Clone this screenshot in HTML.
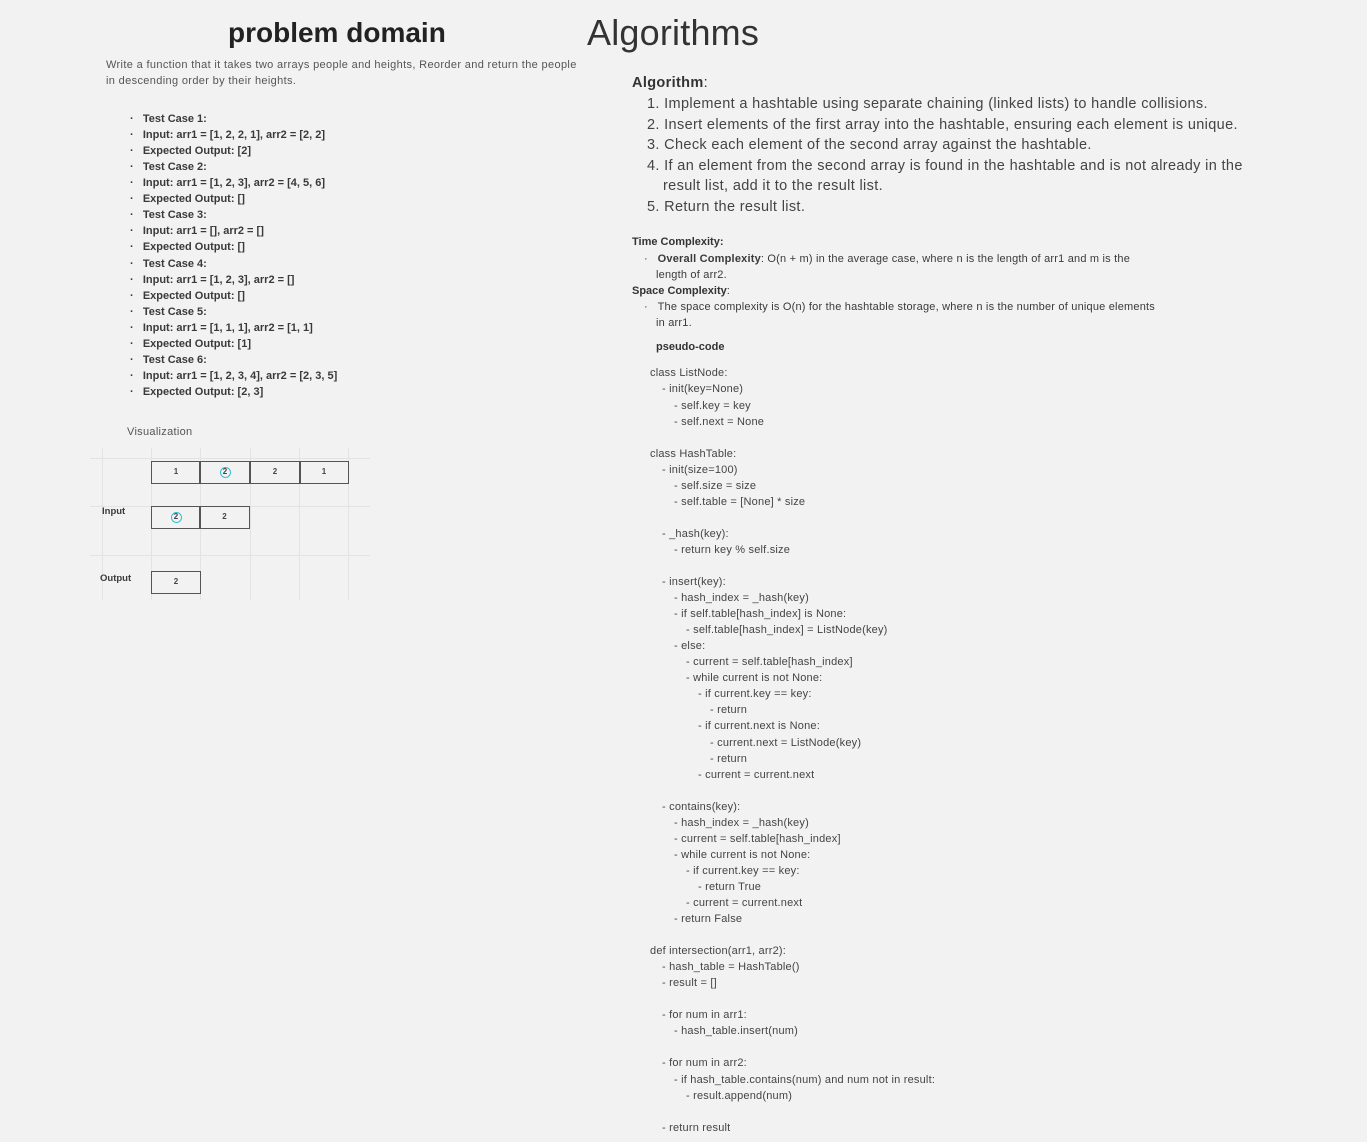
<!DOCTYPE html>
<html><head><meta charset="utf-8"><style>
*{margin:0;padding:0;box-sizing:border-box}
body{width:1367px;height:1142px;background:#f2f2f2;font-family:"Liberation Sans",sans-serif;color:#3a3a3a;position:relative;overflow:hidden}
.l{position:absolute;white-space:nowrap;line-height:16px}
.s{font-size:11px}
.b{font-weight:bold}
.m{font-size:14.5px;line-height:20px;color:#444;letter-spacing:0.35px}
.c{font-size:11px;color:#444;letter-spacing:0.2px}
.gl{position:absolute;background:#e3e3e3}
.cell{position:absolute;border:1.5px solid #555;height:23px;font-size:8px;font-weight:bold;text-align:center;line-height:20px;color:#444}
.circ{display:inline-block;width:11px;height:11px;border:1.5px solid #3bbccc;border-radius:50%;line-height:8px;font-size:8px}
.d{font-weight:bold;font-size:12px}
</style></head><body>
<div class="l b" style="left:228px;top:15px;font-size:28px;line-height:36px;color:#222">problem domain</div>
<div class="l" style="left:587px;top:12px;font-size:36px;line-height:42px;color:#333;letter-spacing:0.2px">Algorithms</div>

<div class="l s" style="left:106px;top:57px;color:#555;letter-spacing:0.35px">Write a function that it takes two arrays people and heights, Reorder and return the people</div>
<div class="l s" style="left:106px;top:73px;color:#555;letter-spacing:0.35px">in descending order by their heights.</div>

<div class="l s b" style="left:130px;top:111px">·&nbsp;&nbsp;&nbsp;Test Case 1:</div>
<div class="l s b" style="left:130px;top:127px">·&nbsp;&nbsp;&nbsp;Input: arr1 = [1, 2, 2, 1], arr2 = [2, 2]</div>
<div class="l s b" style="left:130px;top:143px">·&nbsp;&nbsp;&nbsp;Expected Output: [2]</div>
<div class="l s b" style="left:130px;top:159px">·&nbsp;&nbsp;&nbsp;Test Case 2:</div>
<div class="l s b" style="left:130px;top:175px">·&nbsp;&nbsp;&nbsp;Input: arr1 = [1, 2, 3], arr2 = [4, 5, 6]</div>
<div class="l s b" style="left:130px;top:191px">·&nbsp;&nbsp;&nbsp;Expected Output: []</div>
<div class="l s b" style="left:130px;top:207px">·&nbsp;&nbsp;&nbsp;Test Case 3:</div>
<div class="l s b" style="left:130px;top:223px">·&nbsp;&nbsp;&nbsp;Input: arr1 = [], arr2 = []</div>
<div class="l s b" style="left:130px;top:239px">·&nbsp;&nbsp;&nbsp;Expected Output: []</div>
<div class="l s b" style="left:130px;top:256px">·&nbsp;&nbsp;&nbsp;Test Case 4:</div>
<div class="l s b" style="left:130px;top:272px">·&nbsp;&nbsp;&nbsp;Input: arr1 = [1, 2, 3], arr2 = []</div>
<div class="l s b" style="left:130px;top:288px">·&nbsp;&nbsp;&nbsp;Expected Output: []</div>
<div class="l s b" style="left:130px;top:304px">·&nbsp;&nbsp;&nbsp;Test Case 5:</div>
<div class="l s b" style="left:130px;top:320px">·&nbsp;&nbsp;&nbsp;Input: arr1 = [1, 1, 1], arr2 = [1, 1]</div>
<div class="l s b" style="left:130px;top:336px">·&nbsp;&nbsp;&nbsp;Expected Output: [1]</div>
<div class="l s b" style="left:130px;top:352px">·&nbsp;&nbsp;&nbsp;Test Case 6:</div>
<div class="l s b" style="left:130px;top:368px">·&nbsp;&nbsp;&nbsp;Input: arr1 = [1, 2, 3, 4], arr2 = [2, 3, 5]</div>
<div class="l s b" style="left:130px;top:384px">·&nbsp;&nbsp;&nbsp;Expected Output: [2, 3]</div>

<div class="l s" style="left:127px;top:424px;color:#555;letter-spacing:0.3px">Visualization</div>
<div class="gl" style="left:102px;top:448px;width:1px;height:152px"></div>
<div class="gl" style="left:151px;top:448px;width:1px;height:152px"></div>
<div class="gl" style="left:200px;top:448px;width:1px;height:152px"></div>
<div class="gl" style="left:250px;top:448px;width:1px;height:152px"></div>
<div class="gl" style="left:299px;top:448px;width:1px;height:152px"></div>
<div class="gl" style="left:348px;top:448px;width:1px;height:152px"></div>
<div class="gl" style="left:90px;top:458px;width:280px;height:1px"></div>
<div class="gl" style="left:90px;top:506px;width:280px;height:1px"></div>
<div class="gl" style="left:90px;top:555px;width:280px;height:1px"></div>

<div class="cell" style="left:151px;top:461px;width:50px">1</div>
<div class="cell" style="left:199px;top:461px;width:52px"><span class="circ">2</span></div>
<div class="cell" style="left:249px;top:461px;width:52px">2</div>
<div class="cell" style="left:299px;top:461px;width:50px">1</div>
<div class="l b" style="left:102px;top:504px;font-size:9.5px">Input</div>
<div class="cell" style="left:151px;top:506px;width:50px"><span class="circ">2</span></div>
<div class="cell" style="left:199px;top:506px;width:51px">2</div>
<div class="l b" style="left:100px;top:571px;font-size:9.5px">Output</div>
<div class="cell" style="left:151px;top:571px;width:50px">2</div>

<div class="l m" style="left:632px;top:73px;color:#333"><b>Algorithm</b>:</div>
<div class="l m" style="left:647px;top:94px">1. Implement a hashtable using separate chaining (linked lists) to handle collisions.</div>
<div class="l m" style="left:647px;top:115px">2. Insert elements of the first array into the hashtable, ensuring each element is unique.</div>
<div class="l m" style="left:647px;top:135px">3. Check each element of the second array against the hashtable.</div>
<div class="l m" style="left:647px;top:156px">4. If an element from the second array is found in the hashtable and is not already in the</div>
<div class="l m" style="left:663px;top:176px">result list, add it to the result list.</div>
<div class="l m" style="left:647px;top:197px">5. Return the result list.</div>

<div class="l s b" style="left:632px;top:234px;color:#333">Time Complexity:</div>
<div class="l s" style="left:644px;top:251px;letter-spacing:0.2px">·&nbsp;&nbsp;&nbsp;<b>Overall Complexity</b>: O(n + m) in the average case, where n is the length of arr1 and m is the</div>
<div class="l s" style="left:656px;top:267px;letter-spacing:0.2px">length of arr2.</div>
<div class="l s" style="left:632px;top:283px;color:#333"><b>Space Complexity</b>:</div>
<div class="l s" style="left:644px;top:299px;letter-spacing:0.2px">·&nbsp;&nbsp;&nbsp;The space complexity is O(n) for the hashtable storage, where n is the number of unique elements</div>
<div class="l s" style="left:656px;top:315px;letter-spacing:0.2px">in arr1.</div>
<div class="l s b" style="left:656px;top:339px;color:#333">pseudo-code</div>

<div class="l c" style="left:650px;top:365px">class ListNode:</div>
<div class="l c" style="left:662px;top:381px">- init(key=None)</div>
<div class="l c" style="left:674px;top:398px">- self.key = key</div>
<div class="l c" style="left:674px;top:414px">- self.next = None</div>
<div class="l c" style="left:650px;top:446px">class HashTable:</div>
<div class="l c" style="left:662px;top:462px">- init(size=100)</div>
<div class="l c" style="left:674px;top:478px">- self.size = size</div>
<div class="l c" style="left:674px;top:494px">- self.table = [None] * size</div>
<div class="l c" style="left:662px;top:526px">- _hash(key):</div>
<div class="l c" style="left:674px;top:542px">- return key % self.size</div>
<div class="l c" style="left:662px;top:574px">- insert(key):</div>
<div class="l c" style="left:674px;top:590px">- hash_index = _hash(key)</div>
<div class="l c" style="left:674px;top:606px">- if self.table[hash_index] is None:</div>
<div class="l c" style="left:686px;top:622px">- self.table[hash_index] = ListNode(key)</div>
<div class="l c" style="left:674px;top:638px">- else:</div>
<div class="l c" style="left:686px;top:654px">- current = self.table[hash_index]</div>
<div class="l c" style="left:686px;top:670px">- while current is not None:</div>
<div class="l c" style="left:698px;top:686px">- if current.key == key:</div>
<div class="l c" style="left:710px;top:702px">- return</div>
<div class="l c" style="left:698px;top:718px">- if current.next is None:</div>
<div class="l c" style="left:710px;top:735px">- current.next = ListNode(key)</div>
<div class="l c" style="left:710px;top:751px">- return</div>
<div class="l c" style="left:698px;top:767px">- current = current.next</div>
<div class="l c" style="left:662px;top:799px">- contains(key):</div>
<div class="l c" style="left:674px;top:815px">- hash_index = _hash(key)</div>
<div class="l c" style="left:674px;top:831px">- current = self.table[hash_index]</div>
<div class="l c" style="left:674px;top:847px">- while current is not None:</div>
<div class="l c" style="left:686px;top:863px">- if current.key == key:</div>
<div class="l c" style="left:698px;top:879px">- return True</div>
<div class="l c" style="left:686px;top:895px">- current = current.next</div>
<div class="l c" style="left:674px;top:911px">- return False</div>
<div class="l c" style="left:650px;top:943px">def intersection(arr1, arr2):</div>
<div class="l c" style="left:662px;top:959px">- hash_table = HashTable()</div>
<div class="l c" style="left:662px;top:975px">- result = []</div>
<div class="l c" style="left:662px;top:1007px">- for num in arr1:</div>
<div class="l c" style="left:674px;top:1023px">- hash_table.insert(num)</div>
<div class="l c" style="left:662px;top:1055px">- for num in arr2:</div>
<div class="l c" style="left:674px;top:1072px">- if hash_table.contains(num) and num not in result:</div>
<div class="l c" style="left:686px;top:1088px">- result.append(num)</div>
<div class="l c" style="left:662px;top:1120px">- return result</div>
</body></html>
